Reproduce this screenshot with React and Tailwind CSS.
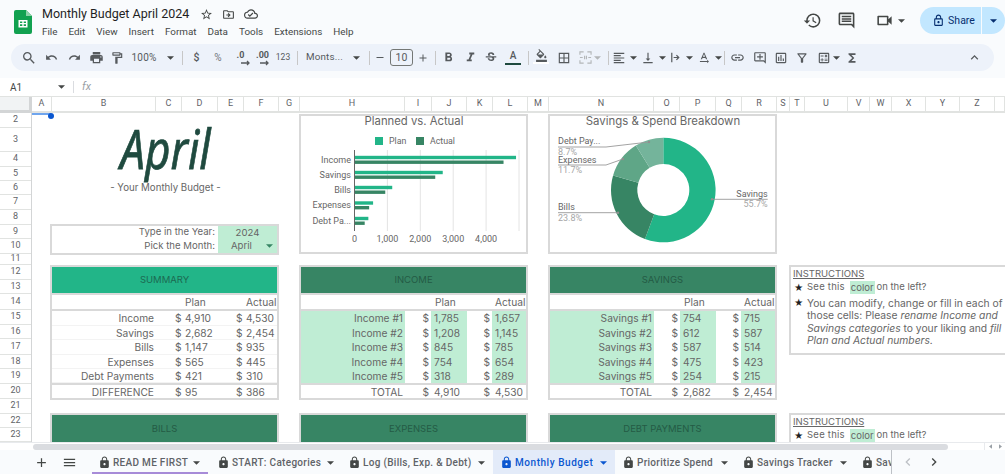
import React from "react";
import {
  MdSearch, MdUndo, MdRedo, MdPrint, MdOutlineFormatPaint, MdAdd, MdRemove, MdFormatBold, MdFormatItalic,
  MdStrikethroughS, MdFormatColorFill, MdBorderAll, MdFormatAlignLeft, MdVerticalAlignBottom, MdTextRotationNone,
  MdLink, MdOutlineAddComment, MdOutlineAssessment, MdOutlineFilterAlt, MdOutlineCalculate, MdFunctions,
  MdKeyboardArrowUp, MdOutlineStarBorder, MdOutlineDriveFileMove, MdOutlineCloudDone, MdOutlineHistory,
  MdOutlineComment, MdOutlineVideocam, MdLock, MdOutlineLock, MdMenu, MdChevronLeft, MdChevronRight,
} from "react-icons/md";

const UI = "[font-family:Roboto,sans-serif]";
const SHEET = "[font-family:Inter,sans-serif]";

const Caret = ({ className = "text-[#444746]" }) => (
  <svg viewBox="0 0 8 4" className={`w-[7px] h-[4px] shrink-0 fill-current ${className}`}><path d="M0 0h8L4 4z" /></svg>
);

const Divider = ({ w }) => (
  <div className={`${w} h-full flex items-center justify-center`}><div className="w-px h-[14px] bg-[#c7c7c7]" /></div>
);

const Slot = ({ w, children, gap = "gap-[4px]" }) => (
  <div className={`${w} h-full flex items-center justify-center ${gap} shrink-0 text-[#565a5d]`}>{children}</div>
);

const Dec = ({ t, w }) => (
  <Slot w={w}>
    <div className="relative leading-none text-[9px] font-bold text-[#565a5d] -mt-[5px]">
      {t}
      <svg viewBox="0 0 10 6" className="absolute left-[4px] top-[9px] w-[10px] h-[6px] stroke-[#565a5d] fill-none stroke-[1.3]"><path d="M0 3h8M6 1l2 2-2 2" /></svg>
    </div>
  </Slot>
);

function Toolbar() {
  const s = 15;
  return (
    <div className={`mx-[11px] h-[27px] rounded-full bg-[#edf2fa] flex items-center pl-[7px] ${UI}`}>
      <Slot w="w-[22px]"><MdSearch size={16} /></Slot>
      <Slot w="w-[23px]"><MdUndo size={13} /></Slot>
      <Slot w="w-[22px]"><MdRedo size={13} /></Slot>
      <Slot w="w-[22px]"><MdPrint size={15} /></Slot>
      <Slot w="w-[20px]"><MdOutlineFormatPaint size={14} /></Slot>
      <Slot w="w-[51px]" gap="gap-[10px]"><span className="text-[10px] tracking-[0.2px]">100%</span><Caret /></Slot>
      <Divider w="w-[9px]" />
      <Slot w="w-[19px]"><span className="text-[10.5px] font-medium">$</span></Slot>
      <Slot w="w-[24px]"><span className="text-[10px] text-[#70757a]">%</span></Slot>
      <Dec t=".0" w="w-[21px]" />
      <Dec t=".00" w="w-[23px]" />
      <Slot w="w-[18px]"><span className="text-[8.5px]">123</span></Slot>
      <Divider w="w-[10px]" />
      <Slot w="w-[62px]" gap="gap-[10px]"><span className="text-[9.8px] tracking-[0.2px]">Monts...</span><Caret /></Slot>
      <Divider w="w-[10px]" />
      <Slot w="w-[12px]"><MdRemove size={13} /></Slot>
      <Slot w="w-[31px]"><div className="w-[23px] h-[17px] border border-[#747775] rounded-[3px] flex items-center justify-center text-[10.5px]">10</div></Slot>
      <Slot w="w-[12px]"><MdAdd size={14} /></Slot>
      <Divider w="w-[12px]" />
      <Slot w="w-[15px]"><MdFormatBold size={15} /></Slot>
      <Slot w="w-[28px]"><MdFormatItalic size={s} /></Slot>
      <Slot w="w-[14px]"><MdStrikethroughS size={s} /></Slot>
      <Slot w="w-[30px]">
        <div className="w-[16px] flex flex-col items-center leading-none">
          <span className="text-[10px] font-medium">A</span>
          <div className="w-[16px] h-[2px] mt-[2px] bg-[#1f4a3f]" />
        </div>
      </Slot>
      <Divider w="w-[1px]" />
      <Slot w="w-[24px]">
        <div className="flex flex-col items-center -mt-[2px]">
          <MdFormatColorFill size={13} />
          <div className="w-[16px] h-[2px] bg-white" />
        </div>
      </Slot>
      <Slot w="w-[22px]"><MdBorderAll size={14} /></Slot>
      <Slot w="w-[31px]" gap="gap-[2px]">
        <svg viewBox="0 0 14 14" className="w-[13px] h-[13px] ml-[-2px] stroke-[#b3b6b8] fill-none stroke-[1.2]"><path d="M1 4V1h4M9 1h4v3M1 10v3h4M9 13h4v-3M1 7h3M13 7h-3M6 5v4M8 5v4" /></svg>
        <Caret className="text-[#b3b6b8]" />
      </Slot>
      <Divider w="w-[4px]" />
      <Slot w="w-[29px]"><MdFormatAlignLeft size={14} /><Caret /></Slot>
      <Slot w="w-[28px]"><MdVerticalAlignBottom size={14} /><Caret /></Slot>
      <Slot w="w-[28px]">
        <svg viewBox="0 0 14 14" className="w-[13px] h-[13px] stroke-[#565a5d] fill-none stroke-[1.3]"><path d="M3 2v10M5 7h6M8 4.5L10.5 7 8 9.5" /></svg>
        <Caret />
      </Slot>
      <Slot w="w-[28px]"><MdTextRotationNone size={14} /><Caret /></Slot>
      <Divider w="w-[2px]" />
      <Slot w="w-[24px]"><MdLink size={15} /></Slot>
      <Slot w="w-[21px]"><MdOutlineAddComment size={14} /></Slot>
      <Slot w="w-[21px]"><MdOutlineAssessment size={14} /></Slot>
      <Slot w="w-[22px]"><MdOutlineFilterAlt size={14} /></Slot>
      <Slot w="w-[30px]" gap="gap-[2px]"><MdOutlineCalculate size={14} /><Caret /></Slot>
      <Slot w="w-[17px]"><MdFunctions size={14} /></Slot>
      <div className="ml-auto mr-[12px] text-[#565a5d]"><MdKeyboardArrowUp size={15} /></div>
    </div>
  );
}

function TopBar() {
  return (
    <div className={`h-[44px] flex items-start ${UI}`}>
      <svg viewBox="0 0 18 24" className="w-[18px] h-[24px] ml-[14px] mt-[10px] shrink-0">
        <path d="M2 0h10l6 6v16a2 2 0 0 1-2 2H2a2 2 0 0 1-2-2V2a2 2 0 0 1 2-2z" fill="#12a150" />
        <path d="M12 0l6 6h-6z" fill="#8ed1a8" />
        <path d="M4.5 10h9v7.5h-9z M6 11.5v1.4h2.3v-1.4z M9.7 11.5v1.4H12v-1.4z M6 14.3v1.7h2.3v-1.7z M9.7 14.3v1.7H12v-1.7z" fill="#fff" fillRule="evenodd" />
      </svg>
      <div className="ml-[10px] flex flex-col">
        <div className="flex items-center h-[16px] mt-[6px]">
          <span className="text-[12.5px] leading-none text-[#1f1f1f] w-[157px] whitespace-nowrap">Monthly Budget April 2024</span>
          <div className="flex items-center gap-[9px] text-[#444746] ml-[1px]">
            <MdOutlineStarBorder size={13} />
            <MdOutlineDriveFileMove size={13} />
            <MdOutlineCloudDone size={14} />
          </div>
        </div>
        <div className="flex gap-[11px] mt-[3px] text-[9.9px] leading-[14px] text-[#444746]">
          {["File", "Edit", "View", "Insert", "Format", "Data", "Tools", "Extensions", "Help"].map((m) => (
            <span key={m}>{m}</span>
          ))}
        </div>
      </div>
      <div className="ml-auto flex items-center h-[27px] mt-[7px] text-[#444746]">
        <MdOutlineHistory size={19} />
        <div className="ml-[15px]"><MdOutlineComment size={19} /></div>
        <div className="ml-[19px] flex items-center gap-[4px]"><MdOutlineVideocam size={19} /><Caret /></div>
        <div className="ml-[15px] w-[85px] h-[27px] rounded-full bg-[#c2e7ff] flex text-[#062e6f]">
          <div className="w-[62px] pl-[6px] flex items-center justify-center gap-[3px] border-r border-[#f9fbfd]">
            <MdOutlineLock size={13} />
            <span className="text-[10.5px]">Share</span>
          </div>
          <div className="flex-1 flex items-center justify-center"><Caret className="text-[#062e6f]" /></div>
        </div>
      </div>
    </div>
  );
}

function FormulaBar() {
  return (
    <div className={`h-[18px] bg-white flex items-center text-[#444746] ${UI}`}>
      <span className="ml-[10px] w-[48px] text-[10px]">A1</span>
      <Caret />
      <div className="ml-[8px] w-px h-[12px] bg-[#dadce0]" />
      <span className="ml-[8px] italic [font-family:'Liberation_Serif',serif] text-[11px] text-[#9aa0a6]">fx</span>
    </div>
  );
}

const COLS = [
  ["A", "w-[20px]"], ["B", "w-[104px]"], ["C", "w-[26px]"], ["D", "w-[36px]"], ["E", "w-[26px]"], ["F", "w-[35px]"], ["G", "w-[21px]"],
  ["H", "w-[105px]"], ["I", "w-[27px]"], ["J", "w-[35px]"], ["K", "w-[26px]"], ["L", "w-[35px]"], ["M", "w-[21px]"],
  ["N", "w-[105px]"], ["O", "w-[26px]"], ["P", "w-[36px]"], ["Q", "w-[26px]"], ["R", "w-[35px]"], ["S", "w-[13px]"], ["T", "w-[15px]"],
  ["U", "w-[43px]"], ["V", "w-[22px]"], ["W", "w-[22px]"], ["X", "w-[34px]"], ["Y", "w-[34px]"], ["Z", "w-[35px]"], ["", "w-[10px]"],
];

function ColHeader() {
  return (
    <div className={`h-[17px] flex bg-white border-t border-[#e1e3e1] ${UI}`}>
      <div className="w-[32px] shrink-0 bg-[#f1f3f4] border-r-[3px] border-b-[3px] border-[#d3d5d6]" />
      {COLS.map(([c, w]) => (
        <div key={c} className={`${w} shrink-0 border-r border-b-2 border-[#e1e3e1] flex items-center justify-center text-[9px] text-[#5f6368]`}>{c}</div>
      ))}
    </div>
  );
}

const ROWS = [
  [2, "h-[15px]"], [3, "h-[24px]"], [4, "h-[15px]"], [5, "h-[14px]"], [6, "h-[14px]"], [7, "h-[15px]"], [8, "h-[15px]"], [9, "h-[14px]"],
  [10, "h-[15px]"], [11, "h-[11px]"], [12, "h-[15px]"], [13, "h-[14px]"], [14, "h-[16px]"], [15, "h-[15px]"], [16, "h-[14px]"], [17, "h-[16px]"],
  [18, "h-[14px]"], [19, "h-[15px]"], [20, "h-[15px]"], [21, "h-[15px]"], [22, "h-[14px]"], [23, "h-[14px]"],
];

function RowHeader() {
  return (
    <div className={`w-[32px] shrink-0 border-r border-[#d3d5d6] bg-white ${UI}`}>
      {ROWS.map(([n, h]) => (
        <div key={n} className={`${h} border-b border-[#e1e3e1] flex items-center justify-center text-[9px] text-[#5f6368]`}>{n}</div>
      ))}
    </div>
  );
}

const Line = () => <div className="h-[2px] bg-[#d9d9d9]" />;

const rowH = ["h-[15px]", "h-[14px]", "h-[15px]", "h-[14px]", "h-[14px]"];

function SummaryCard() {
  const data = [
    ["Income", "4,910", "4,530"], ["Savings", "2,682", "2,454"], ["Bills", "1,147", "935"],
    ["Expenses", "565", "445"], ["Debt Payments", "421", "310"],
  ];
  const Row = ({ r, h, sub }) => (
    <div className={`${h} pt-[2px] flex items-center text-[10.2px] text-[#666] ${sub ? "border-b border-[#f3f3f3]" : ""}`}>
      <div className="w-[104px] text-right pr-[2px] whitespace-nowrap">{r[0]}</div>
      <div className="w-[62px] pl-[19px] flex gap-[5px]"><span className="w-[5px]">$</span><span>{r[1]}</span></div>
      <div className="flex-1 pl-[18px] flex gap-[5px]"><span className="w-[5px]">$</span><span>{r[2]}</span></div>
    </div>
  );
  return (
    <div className={`col-start-2 col-span-5 row-start-11 self-start -ml-[2px] border-2 border-[#d9d9d9] bg-white ${SHEET}`}>
      <div className="h-[26px] bg-[#22b588] flex items-center justify-center text-[9.5px] text-[#1c6a52]">SUMMARY</div>
      <Line />
      <div className="h-[14px] pt-[2px] flex items-center text-[10.2px] text-[#666]">
        <div className="w-[104px]" />
        <div className="w-[62px] pl-[29px]">Plan</div>
        <div className="flex-1 pl-[28px]">Actual</div>
      </div>
      <Line />
      {data.map((r, i) => <Row key={r[0]} r={r} h={rowH[i]} sub />)}
      <Line />
      <Row r={["DIFFERENCE", "95", "386"]} h="h-[13px]" />
    </div>
  );
}

function DetailCard({ col, name, rows, plan, actual, total1, total2 }) {
  return (
    <div className={`${col} row-start-11 self-start -ml-[1px] border-2 border-[#d9d9d9] bg-white ${SHEET}`}>
      <div className="h-[26px] bg-[#378564] flex items-center justify-center text-[9.5px] text-[#245b45]">{name}</div>
      <Line />
      <div className="h-[14px] pt-[2px] flex items-center text-[10.2px] text-[#666]">
        <div className="w-[104px]" />
        <div className="w-[27px]" />
        <div className="w-[35px] pl-[3px]">Plan</div>
        <div className="w-[25px]" />
        <div className="flex-1 pl-[3px] whitespace-nowrap">Actual</div>
      </div>
      <Line />
      {rows.map((r, i) => (
        <div key={r} className={`${rowH[i]} flex items-center leading-[15px] text-[10.2px] text-[#666]`}>
          <div className="w-[104px] h-full bg-[#bfedd4] text-right pr-[2px] whitespace-nowrap">{r}</div>
          <div className="w-[26px] h-full text-right pr-[2px] whitespace-nowrap">$</div>
          <div className="w-[36px] h-full bg-[#bfedd4] pl-[3px]">{plan[i]}</div>
          <div className="w-[25px] h-full text-right pr-[2px]">$</div>
          <div className="flex-1 h-full bg-[#bfedd4] pl-[3px]">{actual[i]}</div>
        </div>
      ))}
      <Line />
      <div className="h-[13px] pt-[2px] flex items-center text-[10.2px] text-[#666]">
        <div className="w-[104px] text-right pr-[2px]">TOTAL</div>
        <div className="w-[26px] text-right pr-[2px]">$</div>
        <div className="w-[36px] pl-[3px]">{total1}</div>
        <div className="w-[25px] text-right pr-[2px]">$</div>
        <div className="flex-1 pl-[3px]">{total2}</div>
      </div>
    </div>
  );
}

function HeaderOnly({ col, name, ml }) {
  return (
    <div className={`${col} ${ml} row-start-21 self-start -mt-[1px] border-2 border-b-0 border-[#d9d9d9] ${SHEET}`}>
      <div className="h-[31px] bg-[#378564] pt-[7px] text-center text-[9.5px] text-[#245b45]">{name}</div>
    </div>
  );
}

function Instructions({ row, full }) {
  return (
    <div className={`col-start-20 ${row} self-start w-[240px] -ml-[1px] border-2 border-[#d9d9d9] bg-white pl-[2px] text-[#666] whitespace-nowrap ${SHEET} ${full ? "h-[90px]" : "-mt-[1px]"}`}>
      <div className="h-[13px] text-[9.5px] leading-[13px] underline">INSTRUCTIONS</div>
      <div className="flex items-center h-[15px] text-[9.5px]">
        <span className="w-[14px] pl-[1px] text-[9px] text-[#1f1f1f]">★</span>
        <span className="tracking-[0.25px]">See this&nbsp;</span>
        <span className="bg-[#bfedd4] h-[13px] leading-[13px] px-[1px] ml-[2px]">color</span>
        <span className="ml-[2px]">on the left?</span>
      </div>
      <div className={full ? "flex text-[10.3px] leading-[12.3px] mt-[2px]" : "hidden"}>
        <span className="w-[14px] pl-[1px] text-[9px] text-[#1f1f1f]">★</span>
        <div>
          <div>You can modify, change or fill in each of</div>
          <div>those cells: Please <i>rename Income and</i></div>
          <div><i>Savings categories</i> to your liking and <i>fill</i></div>
          <div><i>Plan and Actual numbers.</i></div>
        </div>
      </div>
    </div>
  );
}

function BarChart() {
  const X = (v) => 354.5 + v * 0.0329;
  const cats = [
    ["Income", 4910, 4530, 157.5], ["Savings", 2682, 2454, 172.5], ["Bills", 1147, 935, 187.5],
    ["Expenses", 565, 445, 203], ["Debt Pa...", 421, 310, 218.5],
  ];
  return (
    <div className="col-start-8 col-span-5 row-start-1 row-span-9 self-start mt-px -ml-[1px] w-[229px] h-[140px] border-2 border-[#d9d9d9] bg-white">
      <svg viewBox="301 116 225 136" className="w-[225px] h-[136px] block overflow-visible">
        <text x="414" y="125" textAnchor="middle" fontSize="11.3" fill="#666" fontFamily="Inter">Planned vs. Actual</text>
        <rect x="375" y="137" width="8" height="8" fill="#22b588" />
        <text x="389" y="144" fontSize="8.8" fill="#666" fontFamily="Roboto">Plan</text>
        <rect x="416" y="137" width="8" height="8" fill="#378564" />
        <text x="430" y="144" fontSize="8.8" fill="#666" fontFamily="Roboto">Actual</text>
        {[1000, 2000, 3000, 4000, 5000].map((v) => (
          <line key={v} x1={X(v)} x2={X(v)} y1="150" y2="231" stroke="#e4e4e4" strokeWidth="1" />
        ))}
        {cats.map(([n, p, a, y]) => (
          <g key={n}>
            <rect x="354.5" y={y - 1.7} width={p * 0.0329} height="3.4" fill="#22b588" />
            <rect x="354.5" y={y + 3} width={a * 0.0329} height="3.4" fill="#378564" />
            <text x="351" y={y + 5} textAnchor="end" fontSize="9" fill="#666" fontFamily="Roboto">{n}</text>
          </g>
        ))}
        <line x1="354.5" x2="354.5" y1="150" y2="231" stroke="#666" strokeWidth="1" />
        {[[0, "0"], [1000, "1,000"], [2000, "2,000"], [3000, "3,000"], [4000, "4,000"]].map(([v, t]) => (
          <text key={v} x={X(v)} y="242" textAnchor="middle" fontSize="9" fill="#666" fontFamily="Roboto">{t}</text>
        ))}
      </svg>
    </div>
  );
}

function DonutChart() {
  const cx = 663.3, cy = 190, R = 52.3, r = 26;
  const slices = [[55.7, "#22b588"], [23.8, "#378564"], [11.7, "#5fa687"], [8.8, "#74b49b"]];
  let acc = 0;
  const pt = (rad, pct) => {
    const a = (pct / 100) * 2 * Math.PI;
    return [cx + rad * Math.sin(a), cy - rad * Math.cos(a)];
  };
  const arcs = slices.map(([p, c]) => {
    const s = acc, e = acc + p;
    acc = e;
    const [x1, y1] = pt(R, s), [x2, y2] = pt(R, e), [x3, y3] = pt(r, e), [x4, y4] = pt(r, s);
    const lg = p > 50 ? 1 : 0;
    return <path key={c} fill={c} d={`M${x1} ${y1}A${R} ${R} 0 ${lg} 1 ${x2} ${y2}L${x3} ${y3}A${r} ${r} 0 ${lg} 0 ${x4} ${y4}Z`} />;
  });
  const lab = { fontFamily: "Roboto", fontSize: 9 };
  return (
    <div className="col-start-14 col-span-5 row-start-1 row-span-9 self-start mt-px -ml-[1px] w-[229px] h-[140px] border-2 border-[#d9d9d9] bg-white">
      <svg viewBox="550 116 225 136" className="w-[225px] h-[136px] block overflow-visible">
        <text x="663" y="125" textAnchor="middle" fontSize="11.4" fill="#666" fontFamily="Inter">Savings &amp; Spend Breakdown</text>
        {arcs}
        <g stroke="#999" fill="none" strokeWidth="0.9">
          <path d="M712 199.3H767.7" />
          <path d="M558 212.7H618" />
          <path d="M558 165H606L623 159" />
          <path d="M558 147H606L649 142" />
        </g>
        <g fill="#8f8f8f">
          <circle cx="712" cy="199.3" r="1.2" /><circle cx="618" cy="212.7" r="1.2" />
          <circle cx="623" cy="159" r="1.2" /><circle cx="649" cy="142" r="1.2" />
        </g>
        <g {...lab} fill="#666">
          <text x="767.7" y="197" textAnchor="end">Savings</text>
          <text x="558" y="210">Bills</text>
          <text x="558" y="163">Expenses</text>
          <text x="558" y="144">Debt Pay...</text>
        </g>
        <g {...lab} fill="#a6a6a6">
          <text x="767.7" y="207" textAnchor="end">55.7%</text>
          <text x="558" y="221">23.8%</text>
          <text x="558" y="173">11.7%</text>
          <text x="558" y="155">8.7%</text>
        </g>
      </svg>
    </div>
  );
}

function Sheet() {
  return (
    <div className="relative flex h-[329px] overflow-hidden bg-white">
      <RowHeader />
      <div className="relative flex-1 grid overflow-hidden grid-cols-[20px_104px_26px_36px_26px_35px_21px_105px_27px_35px_26px_35px_21px_105px_26px_36px_26px_35px_13px_15px_43px_22px_22px_34px_34px_35px_10px] grid-rows-[15px_24px_15px_14px_14px_15px_15px_14px_15px_11px_15px_14px_16px_15px_14px_16px_14px_15px_15px_15px_14px_14px]">
        <div className="absolute left-0 top-0 w-[19px] h-[2px] bg-[#6fa5ee]" />
        <div className="absolute left-[16px] top-0 w-[6px] h-[6px] rounded-full bg-[#0b57d0]" />
        <div className="col-start-2 col-span-5 row-start-2 row-span-5 flex flex-col items-center overflow-visible">
          <span className="inline-block [font-family:'Liberation_Serif',serif] italic text-[44px] leading-[40px] text-[#1f4a3f] [-webkit-text-stroke:0.6px_#1f4a3f] scale-y-[1.25] origin-center">April</span>
          <span className={`mt-[14px] text-[9.7px] leading-[12px] text-[#666] whitespace-nowrap ${SHEET}`}>- Your Monthly Budget -</span>
        </div>
        <div className={`col-start-2 col-span-5 row-start-8 self-start -mt-[1px] -ml-[2px] border-2 border-[#d9d9d9] text-[9.6px] text-[#666] ${SHEET}`}>
          <div className="h-[13px] flex items-center">
            <div className="w-[166px] text-right pr-[3px]">Type in the Year:</div>
            <div className="flex-1 h-full bg-[#bfedd4] text-center leading-[13px]">2024</div>
          </div>
          <div className="h-[14px] flex items-center">
            <div className="w-[166px] text-right pr-[3px]">Pick the Month:</div>
            <div className="flex-1 h-full bg-[#bfedd4] flex items-center justify-between pl-[13px] pr-[4px]">April<Caret className="text-[#378564]" /></div>
          </div>
        </div>
        <BarChart />
        <DonutChart />
        <SummaryCard />
        <DetailCard col="col-start-8 col-span-5" name="INCOME" rows={["Income #1", "Income #2", "Income #3", "Income #4", "Income #5"]}
          plan={["1,785", "1,208", "845", "754", "318"]} actual={["1,657", "1,145", "785", "654", "289"]} total1="4,910" total2="4,530" />
        <DetailCard col="col-start-14 col-span-5" name="SAVINGS" rows={["Savings #1", "Savings #2", "Savings #3", "Savings #4", "Savings #5"]}
          plan={["754", "612", "587", "475", "254"]} actual={["715", "587", "514", "423", "215"]} total1="2,682" total2="2,454" />
        <Instructions row="row-start-11" full />
        <HeaderOnly col="col-start-2 col-span-5" ml="-ml-[2px]" name="BILLS" />
        <HeaderOnly col="col-start-8 col-span-5" ml="-ml-[1px]" name="EXPENSES" />
        <HeaderOnly col="col-start-14 col-span-5" ml="-ml-[1px]" name="DEBT PAYMENTS" />
        <Instructions row="row-start-21" />
      </div>
    </div>
  );
}

function Scrollbar() {
  return (
    <div className="h-[8px] bg-white flex items-center border-t border-[#e8eaed]">
      <div className="ml-[33px] w-[915px] h-[6px] rounded-full bg-[#dadce0]" />
      <div className="ml-auto w-[21px] h-full flex items-center justify-around text-[#9aa0a6] border-l border-[#e8eaed]">
        <svg viewBox="0 0 4 6" className="w-[3px] h-[5px] fill-current"><path d="M4 0v6L0 3z" /></svg>
        <svg viewBox="0 0 4 6" className="w-[3px] h-[5px] fill-current"><path d="M0 0v6l4-3z" /></svg>
      </div>
    </div>
  );
}

function Tab({ w, name, active, under, pad = "pl-[7px]" }) {
  const color = active ? "text-[#0b57d0]" : "text-[#444746]";
  return (
    <div className={`${w} ${pad} shrink-0 h-full flex items-center justify-between relative pr-[8px] pt-px ${active ? "bg-[#e3ebf9]" : ""}`}>
      <div className={`flex items-center ${color}`}>
        <MdLock size={13} />
        <span className={`ml-[2px] text-[10px] font-medium whitespace-nowrap ${active ? "text-[#0b57d0] tracking-[0.55px]" : "text-[#5f6368] tracking-[0.3px]"}`}>{name}</span>
      </div>
      <Caret className={color} />
      {under && <div className="absolute left-0 right-0 bottom-0 h-[2px] bg-[#a78bd8]" />}
    </div>
  );
}

function TabBar() {
  return (
    <div className={`h-[24px] bg-[#f9fbfd] flex items-center ${UI}`}>
      <div className="ml-[34px] w-[15px] text-[#444746]"><MdAdd size={15} /></div>
      <div className="ml-[13px] w-[15px] text-[#444746]"><MdMenu size={15} /></div>
      <div className="ml-[15px] h-full w-[800px] flex overflow-hidden">
        <Tab w="w-[116px]" pad="pl-[6px]" name="READ ME FIRST" under />
        <Tab w="w-[134px]" pad="pl-[9px]" name="START: Categories" />
        <Tab w="w-[151px]" pad="pl-[6px]" name="Log (Bills, Exp. & Debt)" />
        <Tab w="w-[122px]" name="Monthly Budget" active />
        <Tab w="w-[121px]" name="Prioritize Spend" />
        <Tab w="w-[119px]" pad="pl-[6px]" name="Savings Tracker" />
        <div className="w-[37px] pl-[6px] pt-px h-full flex items-center overflow-hidden border-r border-[#bdc1c6] shrink-0 text-[#444746]">
          <MdLock size={13} className="shrink-0" />
          <span className="ml-[2px] text-[10px] font-medium tracking-[0.3px] text-[#5f6368] whitespace-nowrap">Sav</span>
        </div>
      </div>
      <div className="ml-[8px] text-[#bdc1c6]"><MdChevronLeft size={16} /></div>
      <div className="ml-[10px] text-[#444746]"><MdChevronRight size={16} /></div>
    </div>
  );
}

export default function App() {
  return (
    <div className="w-[1005px] h-[474px] overflow-hidden bg-[#f9fbfd]">
      <TopBar />
      <Toolbar />
      <div className="h-[7px]" />
      <FormulaBar />
      <ColHeader />
      <Sheet />
      <Scrollbar />
      <TabBar />
    </div>
  );
}
